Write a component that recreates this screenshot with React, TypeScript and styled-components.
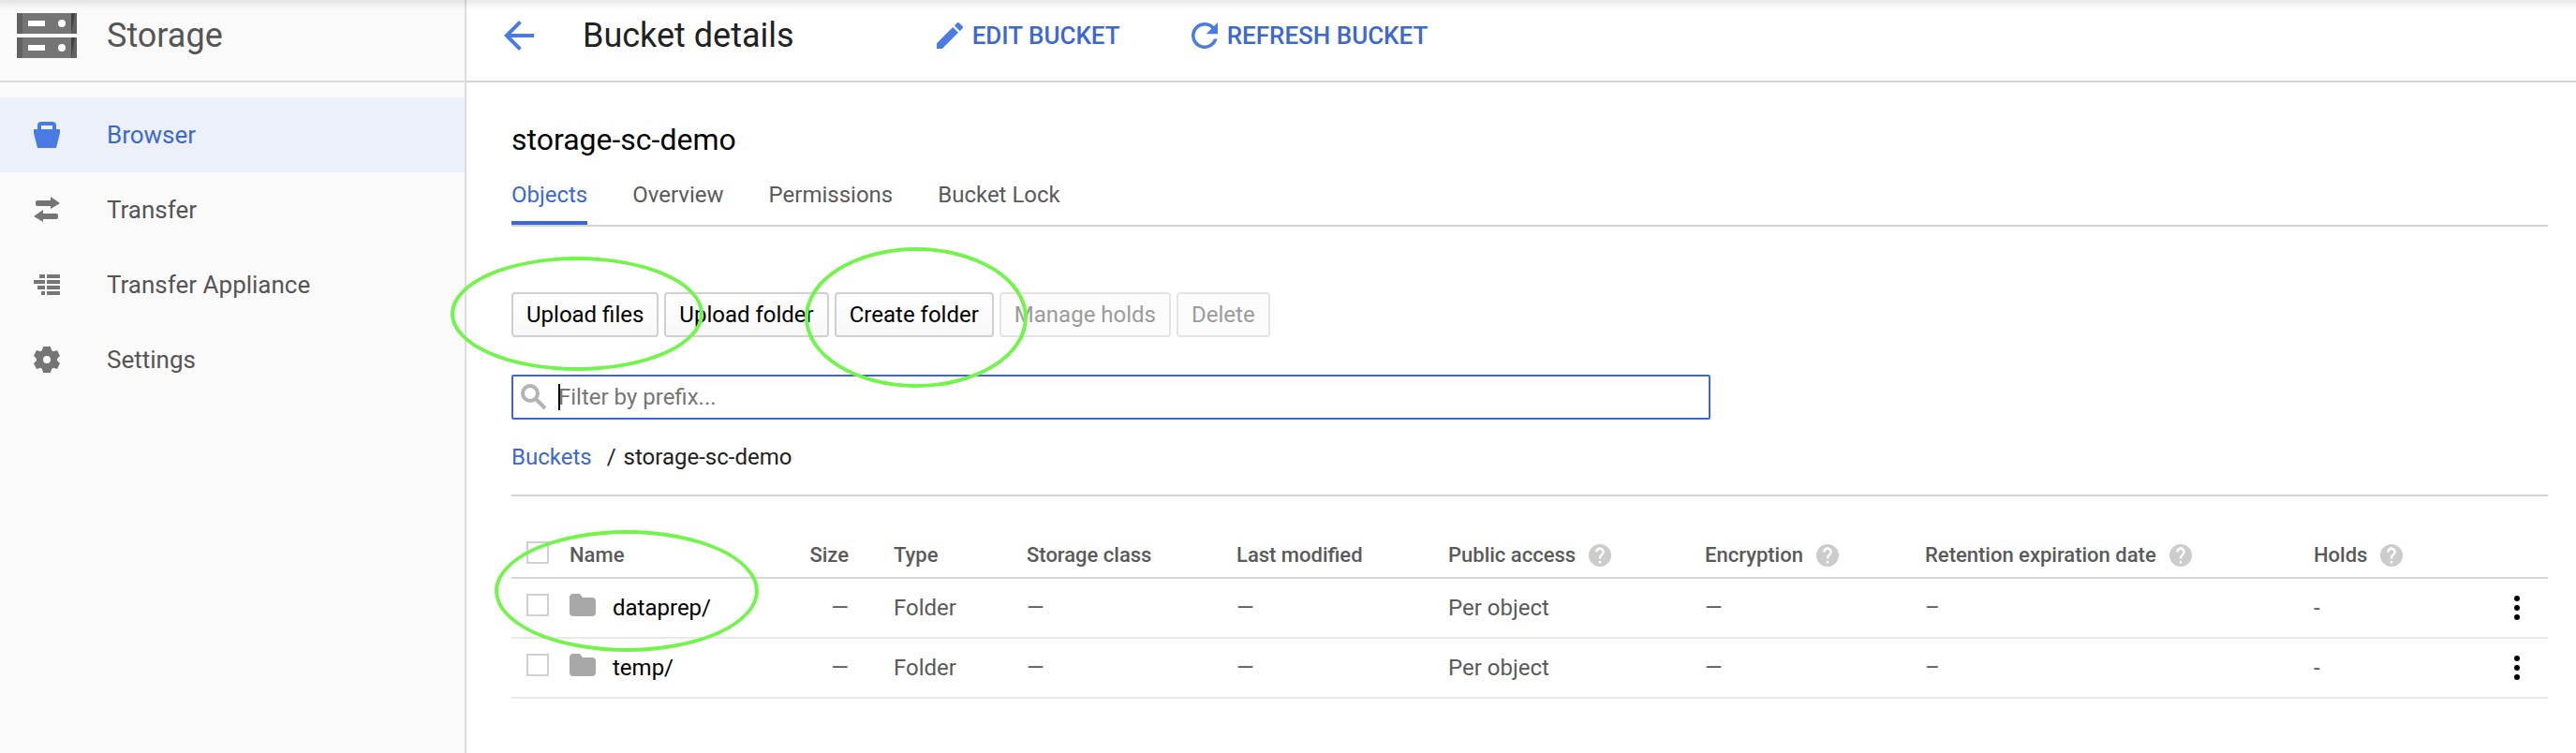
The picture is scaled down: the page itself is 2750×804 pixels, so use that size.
import React from "react";
import styled, { createGlobalStyle, css } from "styled-components";

const GlobalStyle = createGlobalStyle`
  * { box-sizing: border-box; }
  body {
    margin: 0;
    background: #fff;
    color: #212121;
    font-family: Roboto, "Liberation Sans", sans-serif;
    font-size: 24px;
    line-height: 32px;
  }
  button, input { font: inherit; }
  svg { display: block; flex: none; }
`;

const blue = "#3c68d0";
const iconBlue = "#4a7be2";

const Page = styled.div`
  position: relative;
  display: flex;
  min-height: 100vh;
  overflow: hidden;
`;

const TopShadow = styled.div`
  position: absolute;
  top: 0;
  left: 0;
  right: 0;
  height: 10px;
  background: linear-gradient(rgba(0, 0, 0, 0.09), rgba(0, 0, 0, 0));
`;

const Sidebar = styled.aside`
  flex: 0 0 498px;
  background: #fafafa;
  border-right: 2px solid #dcdcdc;
`;

const ProductHeader = styled.header`
  display: flex;
  align-items: center;
  gap: 32px;
  height: 88px;
  padding: 0 18px 10px;
  border-bottom: 2px solid #dcdcdc;
`;

const ProductName = styled.h2`
  margin: 0;
  color: #555;
  font-size: 36px;
  font-weight: 400;
  line-height: 48px;
`;

const Nav = styled.nav`
  display: flex;
  flex-direction: column;
  padding-top: 16px;
`;

const NavLink = styled.a<{ $active?: boolean }>`
  display: flex;
  align-items: center;
  gap: 50px;
  height: 80px;
  padding: 0 36px;
  color: ${(p) => (p.$active ? blue : "#555")};
  background: ${(p) => (p.$active ? "#ebf0fa" : "transparent")};
  font-size: 26px;
  text-decoration: none;

  svg { color: ${(p) => (p.$active ? iconBlue : "#757575")}; }
`;

const Main = styled.main`
  flex: 1;
  min-width: 0;
`;

const Toolbar = styled.header`
  display: flex;
  align-items: center;
  height: 88px;
  padding: 0 40px 10px;
  border-bottom: 2px solid #d2d2d2;
`;

const PageTitle = styled.h1`
  margin: 0 152px 0 52px;
  font-size: 36px;
  font-weight: 400;
  line-height: 48px;
`;

const BackButton = styled.button`
  padding: 0;
  border: 0;
  background: none;
  color: ${iconBlue};
`;

const Actions = styled.div`
  display: flex;
  gap: 76px;
`;

const Action = styled.button`
  display: flex;
  align-items: center;
  gap: 10px;
  padding: 0;
  border: 0;
  background: none;
  color: ${blue};
  font-size: 26px;
  font-weight: 500;

  svg { color: ${iconBlue}; }
`;

const Content = styled.div`
  padding: 44px 30px 0 48px;
`;

const BucketName = styled.h2`
  margin: 0;
  color: #000;
  font-size: 32px;
  font-weight: 400;
  line-height: 34px;
`;

const Tabs = styled.nav`
  display: flex;
  gap: 48px;
  height: 76px;
  border-bottom: 2px solid #d2d2d2;
`;

const Tab = styled.a<{ $active?: boolean }>`
  padding-top: 26px;
  color: ${(p) => (p.$active ? blue : "#5a5a5a")};
  border-bottom: 4px solid ${(p) => (p.$active ? blue : "transparent")};
  text-decoration: none;
`;

const ButtonRow = styled.div`
  display: flex;
  gap: 6px;
  margin: 70px 0 40px;
`;

const BarButton = styled.button`
  height: 48px;
  padding: 0 14px;
  color: #000;
  background: linear-gradient(#fff, #f8f8f8);
  border: 2px solid #d0d0d0;
  border-radius: 4px;

  &:disabled {
    color: #9b9b9b;
    background: #fcfcfc;
    border-color: #e4e4e4;
  }
`;

const FilterBox = styled.label`
  position: relative;
  display: flex;
  align-items: center;
  gap: 12px;
  max-width: 1280px;
  height: 48px;
  padding: 0 8px;
  border: 2px solid ${blue};
  border-radius: 2px;

  svg { color: #b3b3b3; }
`;

const FilterInput = styled.input`
  flex: 1;
  min-width: 0;
  padding: 0;
  border: 0;
  outline: 0;
  background: none;
  color: #000;

  &::placeholder { color: #757575; opacity: 1; }
`;

const Caret = styled.span`
  position: absolute;
  top: 8px;
  left: 48px;
  width: 2px;
  height: 28px;
  background: #000;
`;

const Breadcrumb = styled.nav`
  display: flex;
  gap: 8px;
  height: 82px;
  padding-top: 24px;
  border-bottom: 2px solid #d2d2d2;

  a {
    margin-right: 8px;
    color: ${blue};
    text-decoration: none;
  }
`;

const ObjectTable = styled.table`
  width: 100%;
  margin-top: 32px;
  border-collapse: separate;
  border-spacing: 0;
  table-layout: fixed;
  color: #5a5a5a;
`;

const cell = css<{ $end?: boolean }>`
  padding: 0 ${(p) => (p.$end ? 32 : 0)}px 0 16px;
  text-align: ${(p) => (p.$end ? "right" : "left")};
  white-space: nowrap;
`;

const HeadCell = styled.th<{ $end?: boolean }>`
  ${cell}
  height: 56px;
  padding-top: 8px;
  border-bottom: 2px solid #d5d5d5;
  font-size: 22px;
  font-weight: 500;
`;

const Cell = styled.td<{ $end?: boolean }>`
  ${cell}
  height: 64px;
  border-bottom: 2px solid #e8e8e8;
`;

const WithIcon = styled.span<{ $gap: number }>`
  display: flex;
  align-items: center;
  gap: ${(p) => p.$gap}px;
`;

const ObjectName = styled(WithIcon)`
  color: #000;

  svg { color: #a8a8a8; margin-bottom: 6px; }
`;

const HelpLabel = styled(WithIcon)`
  svg { color: #ccc; }
`;

const Checkbox = styled.input`
  display: block;
  appearance: none;
  width: 24px;
  height: 24px;
  margin: 0 0 6px;
  border: 2px solid #d0d0d0;
  background: #fff;
`;

const MenuButton = styled.button`
  display: flex;
  justify-content: center;
  width: 34px;
  margin: 0 16px 0 auto;
  padding: 0;
  border: 0;
  background: none;
`;

const Ring = styled.div<{ $x: number; $y: number; $w: number; $h: number }>`
  position: absolute;
  left: ${(p) => p.$x}px;
  top: ${(p) => p.$y}px;
  width: ${(p) => p.$w}px;
  height: ${(p) => p.$h}px;
  border: 4px solid #72f54a;
  border-radius: 50%;
  pointer-events: none;
`;

const StorageLogo = () => (
  <svg width="64" height="48" viewBox="0 0 64 48">
    {[0, 26].map((y) => (
      <g key={y} transform={`translate(0 ${y})`}>
        <path fill="#757575" d="M0 0h64v22H0z" />
        <path fill="#616161" d="M0 0h6v22H0zM58 0h6v22h-6z" />
        <path fill="#424242" d="M58 0h4l-4 22z" />
        <path fill="#fff" d="M12 8h18v6H12z" />
        <circle fill="#fff" cx="48" cy="11" r="4" />
      </g>
    ))}
  </svg>
);

const BucketIcon = () => (
  <svg width="28" height="28" viewBox="0 0 28 28" fill="currentColor">
    <path fillRule="evenodd" d="M4 8V4a4 4 0 0 1 4-4h12a4 4 0 0 1 4 4v4h4v4l-4 16H4L0 12V8zM8 4v4h12V4z" />
  </svg>
);

const TransferIcon = () => (
  <svg width="28" height="28" viewBox="0 0 28 28" fill="currentColor">
    <path d="M4 4h14V0l10 7-10 6v-3H4a2 2 0 0 1-2-2V6a2 2 0 0 1 2-2zM24 18H10v-4L0 21l10 6v-3h14a2 2 0 0 0 2-2v-2a2 2 0 0 0-2-2z" />
  </svg>
);

const ApplianceIcon = () => (
  <svg width="28" height="22" viewBox="0 0 28 22" fill="currentColor">
    <path d="M6 0h6v4H6zM14 0h14v4H14zM0 6h12v4H0zM14 6h14v4H14zM4 12h8v4H4zM14 12h14v4H14zM8 18h4v4H8zM14 18h14v4H14z" />
  </svg>
);

const GearIcon = () => (
  <svg width="28" height="28" viewBox="0 0 28 28" fill="currentColor">
    <path fillRule="evenodd" d="M10 0h8l1 4 2 1.200 4-1.200 3 6-3 3v2l3 3-3 6-4-1.200-2 1.200-1 4h-8l-1-4-2-1.200-4 1.200-3-6 3-3v-2l-3-3 3-6 4 1.200 2-1.200zM14 10a4 4 0 1 0 0 8 4 4 0 0 0 0-8z" />
  </svg>
);

const BackIcon = () => (
  <svg width="32" height="32" viewBox="4 4 16 16" fill="currentColor">
    <path d="M20 11H7.830l5.590-5.590L12 4l-8 8 8 8 1.410-1.410L7.830 13H20v-2z" />
  </svg>
);

const EditIcon = () => (
  <svg width="28" height="28" viewBox="3 3 18 18" fill="currentColor">
    <path d="M3 17.250V21h3.750L17.810 9.940l-3.750-3.750L3 17.250zM20.710 7.040a1 1 0 0 0 0-1.410l-2.340-2.340a1 1 0 0 0-1.410 0l-1.830 1.830 3.750 3.750 1.830-1.830z" />
  </svg>
);

const RefreshIcon = () => (
  <svg width="28" height="28" viewBox="4 4 16 16" fill="currentColor">
    <path d="M17.650 6.350A7.960 7.960 0 0 0 12 4a8 8 0 1 0 7.730 10h-2.080A6 6 0 1 1 12 6c1.660 0 3.140.690 4.220 1.780L13 11h7V4l-2.350 2.350z" />
  </svg>
);

const SearchIcon = () => (
  <svg width="28" height="28" viewBox="0 0 28 28" fill="none" stroke="currentColor">
    <circle cx="10" cy="10" r="8" strokeWidth="4" />
    <path d="M15.500 15.500L26 26" strokeWidth="4" />
  </svg>
);

const HelpIcon = () => (
  <svg width="24" height="24" viewBox="2 2 20 20" fill="currentColor">
    <path d="M12 2a10 10 0 1 0 0 20 10 10 0 0 0 0-20zm1 17h-2v-2h2v2zm2.070-7.750l-.900.920C13.450 12.900 13 13.500 13 15h-2v-.500c0-1.100.450-2.100 1.170-2.830l1.240-1.260A2 2 0 1 0 10 9H8a4 4 0 1 1 7.070 2.250z" />
  </svg>
);

const FolderIcon = () => (
  <svg width="28" height="24" viewBox="0 0 28 24" fill="currentColor">
    <path d="M4 0h7l3 4h10a4 4 0 0 1 4 4v12a4 4 0 0 1-4 4H4a4 4 0 0 1-4-4V4a4 4 0 0 1 4-4z" />
  </svg>
);

const MoreIcon = () => (
  <svg width="6" height="26" viewBox="0 0 6 26">
    {[3, 13, 23].map((y) => (
      <circle key={y} cx="3" cy={y} r="3" />
    ))}
  </svg>
);

const navItems = [
  { label: "Browser", icon: <BucketIcon />, active: true },
  { label: "Transfer", icon: <TransferIcon /> },
  { label: "Transfer Appliance", icon: <ApplianceIcon /> },
  { label: "Settings", icon: <GearIcon /> },
];

const tabs = ["Objects", "Overview", "Permissions", "Bucket Lock"];

const columnWidths = [46, 208, 138, 142, 224, 226, 274, 235, 415, 147, 119];

const columns = [
  { label: "Name" },
  { label: "Size", end: true },
  { label: "Type" },
  { label: "Storage class" },
  { label: "Last modified" },
  { label: "Public access", help: true },
  { label: "Encryption", help: true },
  { label: "Retention expiration date", help: true },
  { label: "Holds", help: true },
];

const folders = ["dataprep/", "temp/"];

export default function App() {
  return (
    <Page>
      <GlobalStyle />
      <Sidebar>
        <ProductHeader>
          <StorageLogo />
          <ProductName>Storage</ProductName>
        </ProductHeader>
        <Nav aria-label="Storage">
          {navItems.map((item) => (
            <NavLink key={item.label} href="#" $active={item.active}>
              {item.icon}
              {item.label}
            </NavLink>
          ))}
        </Nav>
      </Sidebar>
      <Main>
        <Toolbar>
          <BackButton aria-label="Back"><BackIcon /></BackButton>
          <PageTitle>Bucket details</PageTitle>
          <Actions>
            <Action><EditIcon />EDIT BUCKET</Action>
            <Action><RefreshIcon />REFRESH BUCKET</Action>
          </Actions>
        </Toolbar>
        <Content>
          <BucketName>storage-sc-demo</BucketName>
          <Tabs aria-label="Bucket">
            {tabs.map((tab, i) => (
              <Tab key={tab} href="#" $active={i === 0}>{tab}</Tab>
            ))}
          </Tabs>
          <ButtonRow>
            <BarButton>Upload files</BarButton>
            <BarButton>Upload folder</BarButton>
            <BarButton>Create folder</BarButton>
            <BarButton disabled>Manage holds</BarButton>
            <BarButton disabled>Delete</BarButton>
          </ButtonRow>
          <FilterBox>
            <SearchIcon />
            <FilterInput type="text" aria-label="Filter by prefix" placeholder="Filter by prefix..." />
            <Caret />
          </FilterBox>
          <Breadcrumb aria-label="Breadcrumb">
            <a href="#">Buckets</a>
            <span>/</span>
            <span>storage-sc-demo</span>
          </Breadcrumb>
          <ObjectTable>
            <colgroup>
              {columnWidths.map((width, i) => (
                <col key={i} width={width} />
              ))}
            </colgroup>
            <thead>
              <tr>
                <HeadCell><Checkbox type="checkbox" aria-label="Select all" /></HeadCell>
                {columns.map((c) => (
                  <HeadCell key={c.label} $end={c.end}>
                    {c.help ? <HelpLabel $gap={14}>{c.label}<HelpIcon /></HelpLabel> : c.label}
                  </HeadCell>
                ))}
                <HeadCell />
              </tr>
            </thead>
            <tbody>
              {folders.map((name) => (
                <tr key={name}>
                  <Cell><Checkbox type="checkbox" aria-label={`Select ${name}`} /></Cell>
                  <Cell><ObjectName $gap={18}><FolderIcon />{name}</ObjectName></Cell>
                  <Cell $end>—</Cell>
                  <Cell>Folder</Cell>
                  <Cell>—</Cell>
                  <Cell>—</Cell>
                  <Cell>Per object</Cell>
                  <Cell>—</Cell>
                  <Cell>–</Cell>
                  <Cell>-</Cell>
                  <Cell><MenuButton aria-label={`Actions for ${name}`}><MoreIcon /></MenuButton></Cell>
                </tr>
              ))}
            </tbody>
          </ObjectTable>
        </Content>
      </Main>
      <TopShadow />
      <Ring $x={481} $y={274} $w={270} $h={122} />
      <Ring $x={859} $y={264} $w={238} $h={150} />
      <Ring $x={528} $y={566} $w={282} $h={130} />
    </Page>
  );
}
